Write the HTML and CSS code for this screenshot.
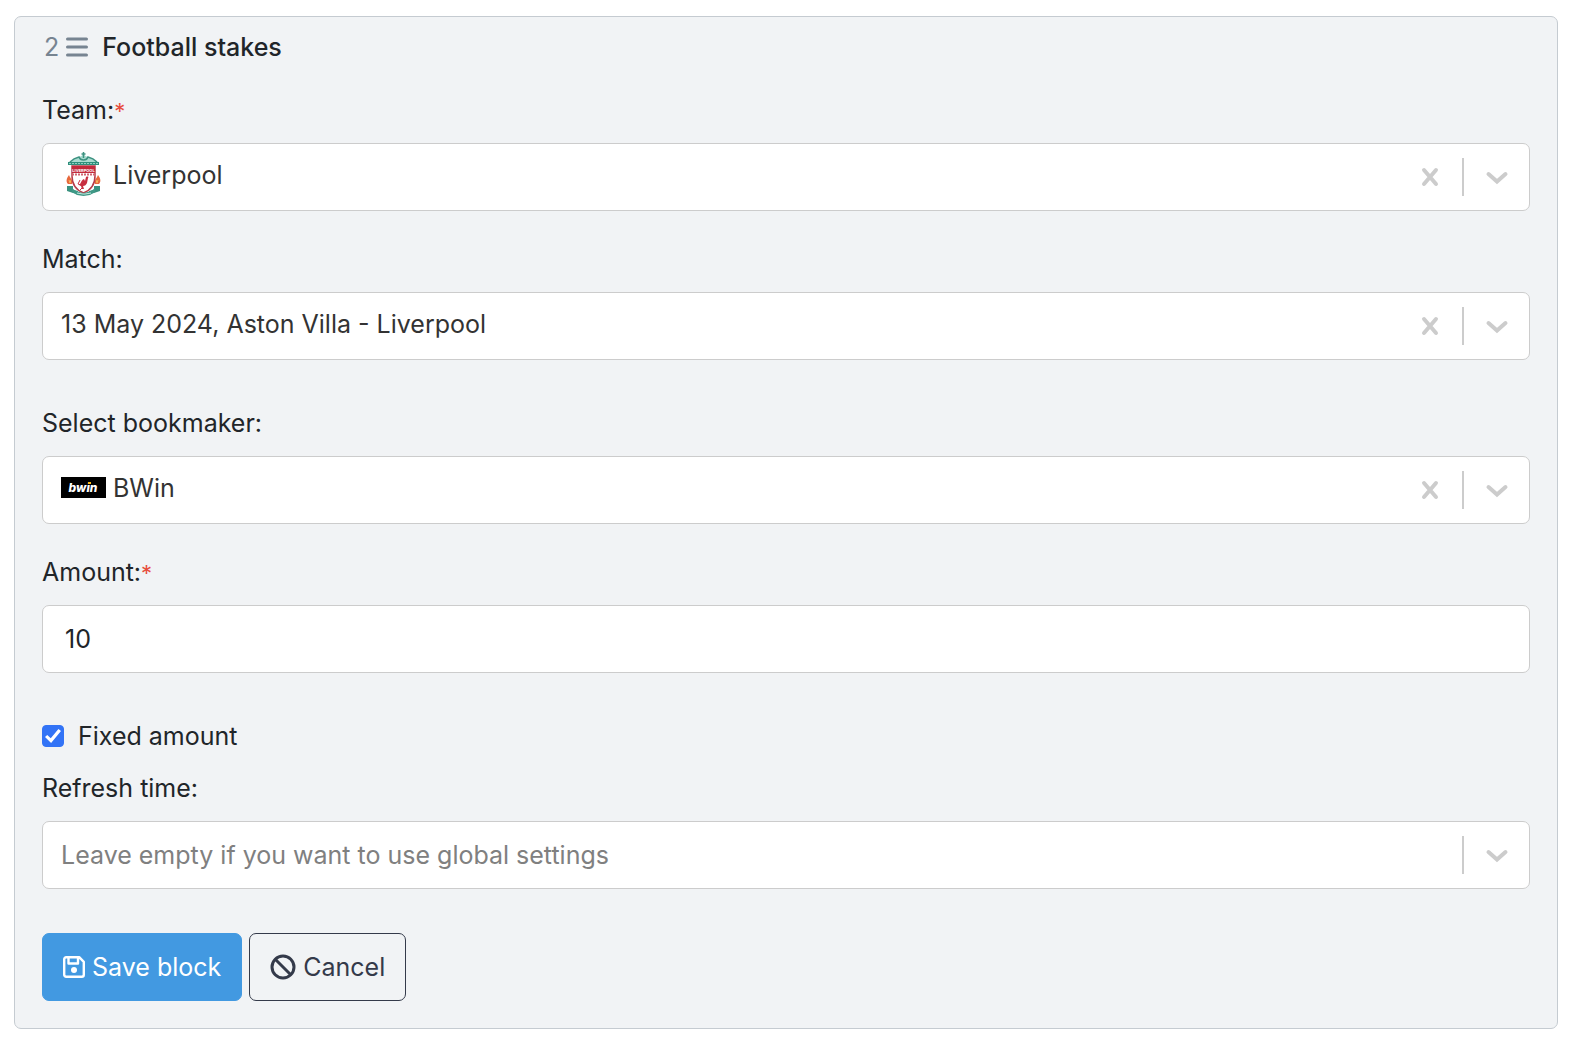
FILE: index.html
```html
<!DOCTYPE html>
<html lang="en">
<head>
    <meta charset="UTF-8">
    <title>Football stakes</title>
    <meta name="viewport" content="width=device-width, initial-scale=1.0">
    <link rel="stylesheet" href="styles.css">
</head>
<body>
    <!-- shared icons -->
    <svg class="sprite" aria-hidden="true">
        <symbol id="icon-clear" viewBox="0 0 20 20">
            <path d="M4 3l12 14M16 3L4 17" fill="none" stroke="currentColor" stroke-width="4" stroke-linecap="round"/>
        </symbol>
        <symbol id="icon-chevron" viewBox="0 0 28 28">
            <path d="M5.500 11l8.500 7.500 8.500-7.500" fill="none" stroke="currentColor" stroke-width="4" stroke-linecap="round"/>
        </symbol>
    </svg>

    <form class="block">
        <h1 class="block-header">
            <span class="block-index">2</span>
            <svg class="icon-menu" viewBox="0 0 22 20" aria-hidden="true">
                <path d="M1.500 2h19M1.500 10h19M1.500 18h19" fill="none" stroke="currentColor" stroke-width="3" stroke-linecap="round"/>
            </svg>
            <span class="block-title">Football stakes</span>
        </h1>

        <div class="field">
            <label for="team">Team:<span class="required">*</span></label>
            <div class="control">
                <svg class="option-image crest" viewBox="0 0 45 45" aria-hidden="true">
                    <!-- gates -->
                    <path d="M7 10c3 0 5-3 8-4 3-1 5-1 7.500-4 2.500 3 4.500 3 7.500 4 3 1 5 4 8 4v3H7z" fill="#a9dcd0"/>
                    <path d="M22.500 0v6M20.500 2h4M9 10c3-3 5-4 9-5 1 3 3 3 4.500 3s3.500 0 4.500-3c4 1 6 2 9 5" fill="none" stroke="#3d9281" stroke-width="1.500"/>
                    <path d="M7 11.500h31" stroke="#2f8f7c" stroke-width="3"/>
                    <path d="M8 11.500h29" stroke="#8fd0c0" stroke-dasharray="2 1"/>
                    <!-- flames -->
                    <path d="M8 23c-3 4-3 7-1 9h4c2-3-1-4-3-9zM37 23c3 4 3 7 1 9h-4c-2-3 1-4 3-9z" fill="#e8683c"/>
                    <path d="M8 28l1 3 1-3M35 28l1 3 1-3" fill="none" stroke="#f6b45f"/>
                    <path d="M6 34h6v4l5 1v3l-5-1-6-2zM39 34h-6v4l-5 1v3l5-1 6-2z" fill="#3a9280"/>
                    <!-- shield -->
                    <path d="M11 14h23v10c0 9-4 14-11.500 17C15 38 11 33 11 24z" fill="#fff" stroke="#b83c48" stroke-width="1.500"/>
                    <path d="M11 14h23v7H11z" fill="#c32a3c"/>
                    <text x="22.500" y="20" class="crest-name">LIVERPOOL</text>
                    <path d="M11 22.500h23" stroke="#cf6672" stroke-width="2" stroke-dasharray="2 1"/>
                    <!-- liver bird -->
                    <path d="M25 25c2-1 3 0 2 1l-1 5c-1 2-2 3-4 3l1 3h-2l-1-3-2-1c2-1 2-5 5-6l1 2z" fill="#c72e40"/>
                    <path d="M19 28l-2 4 3 1M22 35l-3 3" stroke="#c72e40" fill="none"/>
                    <path d="M11 36c3 3 7 4 11.500 5 4.500-1 8.500-2 11.500-5v4l-5 3-6.500 1-6.500-1-5-3z" fill="#3f9987"/>
                    <path d="M16 41l6 1h2l6-1" stroke="#c6e6df" fill="none"/>
                </svg>
                <select id="team" class="value">
                    <option>Liverpool</option>
                </select>
                <button type="button" class="clear" aria-label="Clear team"><svg><use href="#icon-clear"/></svg></button>
                <span class="separator"></span>
                <svg class="chevron" aria-hidden="true"><use href="#icon-chevron"/></svg>
            </div>
        </div>

        <div class="field field-wide">
            <label for="match">Match:</label>
            <div class="control">
                <select id="match" class="value">
                    <option>13 May 2024, Aston Villa - Liverpool</option>
                </select>
                <button type="button" class="clear" aria-label="Clear match"><svg><use href="#icon-clear"/></svg></button>
                <span class="separator"></span>
                <svg class="chevron" aria-hidden="true"><use href="#icon-chevron"/></svg>
            </div>
        </div>

        <div class="field">
            <label for="bookmaker">Select bookmaker:</label>
            <div class="control">
                <svg class="option-image logo" viewBox="0 0 45 21" aria-hidden="true">
                    <path d="M0 0h45v21H0z" fill="#000"/>
                    <text x="22" y="15" class="logo-name">bwin</text>
                    <path d="M27 5h3v2h-3z" fill="#fdbb14"/>
                </svg>
                <select id="bookmaker" class="value">
                    <option>BWin</option>
                </select>
                <button type="button" class="clear" aria-label="Clear bookmaker"><svg><use href="#icon-clear"/></svg></button>
                <span class="separator"></span>
                <svg class="chevron" aria-hidden="true"><use href="#icon-chevron"/></svg>
            </div>
        </div>

        <div class="field field-wide">
            <label for="amount">Amount:<span class="required">*</span></label>
            <input type="text" id="amount" class="text-input" value="10" required>
        </div>

        <div class="check">
            <input type="checkbox" id="fixed" checked>
            <label for="fixed">Fixed amount</label>
        </div>

        <div class="field field-wide">
            <label for="refresh">Refresh time:</label>
            <div class="control">
                <select id="refresh" class="value placeholder">
                    <option value="">Leave empty if you want to use global settings</option>
                </select>
                <span class="separator"></span>
                <svg class="chevron" aria-hidden="true"><use href="#icon-chevron"/></svg>
            </div>
        </div>

        <div class="actions">
            <button type="submit" class="btn btn-primary">
                <svg class="icon-save" viewBox="0 0 22 22" aria-hidden="true">
                    <path d="M3.200 1.200h13l4.600 4.600v13a2 2 0 0 1-2 2H3.200a2 2 0 0 1-2-2V3.200a2 2 0 0 1 2-2zM5.500 1.500v6h9.500v-6" fill="none" stroke="currentColor" stroke-width="2.400" stroke-linejoin="round"/>
                    <circle cx="11" cy="14" r="3" fill="currentColor"/>
                </svg>
                Save block
            </button>
            <button type="button" class="btn btn-outline">
                <svg class="icon-ban" viewBox="0 0 26 26" aria-hidden="true">
                    <path d="M5 5l16 16" stroke="currentColor" stroke-width="3"/>
                    <circle cx="13" cy="13" r="11" fill="none" stroke="currentColor" stroke-width="3"/>
                </svg>
                Cancel
            </button>
        </div>
    </form>
</body>
</html>
```
FILE: styles.css
```css
* {
    margin: 0;
    padding: 0;
    box-sizing: border-box;
}

body {
    background: #fff;
    color: #212529;
    font-family: Inter, "Liberation Sans", sans-serif;
    font-size: 25px;
    line-height: 38px;
}

input,
select,
button {
    font: inherit;
    color: inherit;
}

.sprite {
    display: none;
}

.block {
    margin: 16px 12px 12px 14px;
    padding: 11px 27px 27px;
    background: #f1f3f5;
    border: 1px solid #c5cbd1;
    border-radius: 7px;
}

/* Header */
.block-header {
    display: flex;
    align-items: center;
    margin-bottom: 25px;
    padding-left: 2px;
    font-size: 25px;
    font-weight: 500;
}

.block-index {
    color: #778491;
    font-weight: 400;
}

.icon-menu {
    width: 22px;
    height: 20px;
    margin: 0 14px 0 7px;
    color: #778491;
}

/* Fields */
.field {
    margin-bottom: 29px;
}

.field-wide {
    margin-bottom: 44px;
}

.field label {
    display: block;
    margin-bottom: 14px;
}

.required {
    color: #e74c3c;
    font-size: 22px;
    line-height: 1;
}

.control,
.text-input {
    width: 100%;
    height: 68px;
    background: #fff;
    border: 1px solid #ccc;
    border-radius: 7px;
}

.control {
    display: flex;
    align-items: center;
    padding: 0 18px;
    color: #333;
}

.text-input {
    display: block;
    padding: 0 22px;
}

.value {
    flex: 1;
    min-width: 0;
    height: 66px;
    padding-bottom: 5px;
    appearance: none;
    background: none;
    border: none;
    outline: none;
}

.placeholder {
    padding-bottom: 0;
    color: #808080;
}

.option-image {
    width: 45px;
    margin: 0 7px 5px 0;
}

.crest {
    height: 45px;
}

.crest-name {
    fill: #fff;
    font-size: 4px;
    font-weight: 700;
    text-anchor: middle;
}

.logo {
    height: 21px;
}

.logo-name {
    fill: #fff;
    font-size: 12px;
    font-style: italic;
    font-weight: 800;
    text-anchor: middle;
}

.clear {
    display: flex;
    margin-right: 22px;
    color: #ccc;
    background: none;
    border: none;
    cursor: pointer;
}

.clear svg {
    width: 20px;
    height: 20px;
}

.separator {
    width: 2px;
    height: 38px;
    margin-right: 19px;
    background: #ccc;
}

.chevron {
    width: 28px;
    height: 28px;
    color: #ccc;
}

/* Checkbox */
.check {
    display: flex;
    align-items: center;
    gap: 14px;
    margin-bottom: 14px;
}

.check input {
    display: grid;
    place-items: center;
    width: 22px;
    height: 22px;
    appearance: none;
    background: #fff;
    border: 1px solid #ccc;
    border-radius: 4px;
}

.check input:checked {
    background: #3273f6;
    border-color: #3273f6;
}

.check input:checked::after {
    content: "";
    width: 16px;
    height: 14px;
    background: #fff;
    clip-path: polygon(0 58%, 14% 42%, 36% 66%, 84% 0, 100% 14%, 38% 100%);
}

/* Buttons */
.actions {
    display: flex;
    gap: 7px;
}

.btn {
    display: flex;
    align-items: center;
    gap: 7px;
    height: 68px;
    padding: 0 20px;
    border: 1px solid #4299e1;
    border-radius: 7px;
    cursor: pointer;
}

.btn-primary {
    color: #fff;
    background: #4299e1;
}

.btn-outline {
    color: #343a4a;
    background: none;
    border-color: #343a4a;
}

.icon-save {
    width: 22px;
    height: 22px;
}

.icon-ban {
    width: 26px;
    height: 26px;
}
```
